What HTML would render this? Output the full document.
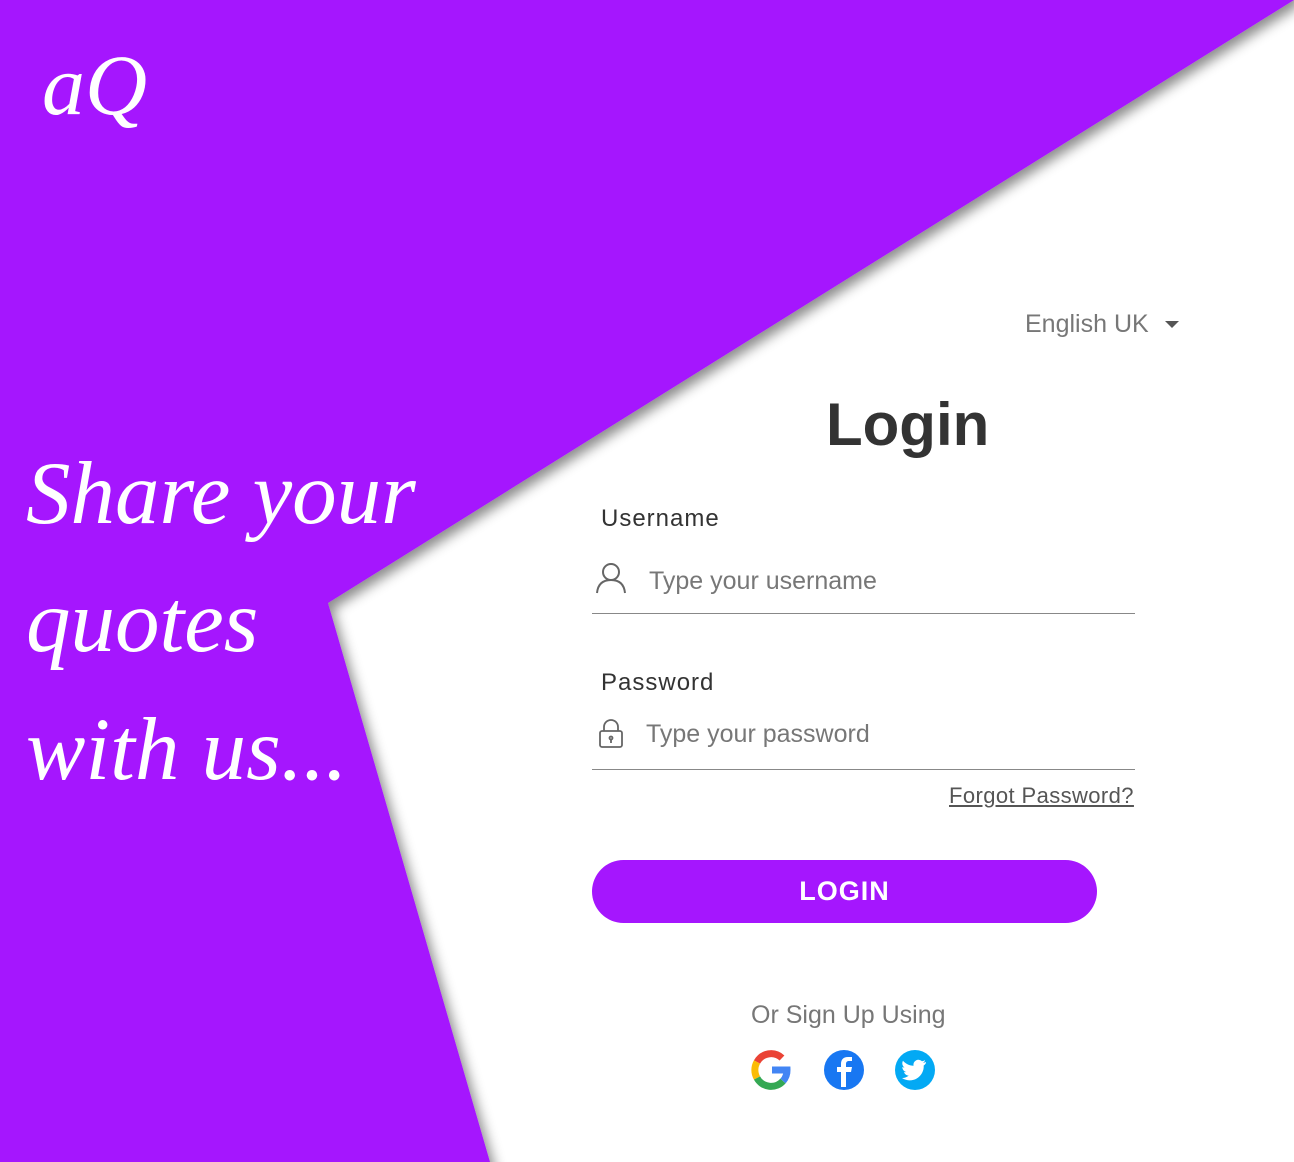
<!DOCTYPE html>
<html><head><meta charset="utf-8"><style>
body{margin:0;width:1294px;height:1162px;overflow:hidden;background:#fff;font-family:"Liberation Sans",sans-serif;position:relative}
.abs{position:absolute}
.script{font-family:"Liberation Serif",serif;font-style:italic;color:#fff}
.lab{font-size:24px;color:#333;letter-spacing:1px}
.ph{font-size:25px;color:#777}
.line{height:1px;background:#888;width:543px;left:592px}
</style></head><body>
<svg class="abs" style="left:0;top:0" width="1294" height="1162">
<defs><filter id="s" x="-20%" y="-20%" width="140%" height="140%"><feDropShadow dx="5" dy="6" stdDeviation="6" flood-color="#000" flood-opacity="0.45"/></filter></defs>
<polygon points="-20,-20 1294,-20 1294,0 328,603 490,1162 490,1182 -20,1182" fill="#a516fe" filter="url(#s)"/>
</svg>
<div class="abs script" style="left:42px;top:30px;font-size:86px;line-height:110px">aQ</div>
<div class="abs script" style="left:26px;top:430px;font-size:89px;line-height:128px">Share your<br>quotes<br>with us...</div>
<div class="abs" style="left:1025px;top:310px;font-size:25px;color:#777">English UK</div>
<div class="abs" style="left:1165px;top:321px;width:0;height:0;border-left:7px solid transparent;border-right:7px solid transparent;border-top:7px solid #555"></div>
<div class="abs" style="left:826px;top:390px;font-size:60px;font-weight:bold;color:#333">Login</div>
<div class="abs lab" style="left:601px;top:505px">Username</div>
<svg class="abs" style="left:595px;top:562px" width="32" height="32" fill="none" stroke="#666" stroke-width="2"><circle cx="16" cy="10" r="8"/><path d="M2 31c1-10 7-13 14-13s13 3 14 13"/></svg>
<div class="abs ph" style="left:649px;top:567px">Type your username</div>
<div class="abs line" style="top:613px"></div>
<div class="abs lab" style="left:601px;top:669px">Password</div>
<svg class="abs" style="left:598px;top:719px" width="26" height="30" fill="none" stroke="#666" stroke-width="1.8"><path d="M6 12V8a7 7 0 0 1 14 0v4"/><rect x="2" y="12" width="22" height="16" rx="2"/><circle cx="13" cy="19" r="1.5"/><path d="M13 20v4"/></svg>
<div class="abs ph" style="left:646px;top:720px">Type your password</div>
<div class="abs line" style="top:769px"></div>
<div class="abs" style="left:949px;top:783px;font-size:22px;color:#555;text-decoration:underline;letter-spacing:0.4px">Forgot Password?</div>
<div class="abs" style="left:592px;top:860px;width:505px;height:63px;border-radius:32px;background:#a516fe;color:#fff;font-size:27px;font-weight:bold;text-align:center;line-height:63px;letter-spacing:1px">LOGIN</div>
<div class="abs" style="left:751px;top:1001px;font-size:25px;color:#777">Or Sign Up Using</div>
<svg class="abs" style="left:751px;top:1050px" width="42" height="40" viewBox="0 0 42 40"><g fill="none" stroke-width="7"><path d="M31 8A16 16 0 0 0 6 12" stroke="#ea4335"/><path d="M6 12a16 16 0 0 0 0 16" stroke="#fbbc05"/><path d="M6 28a16 16 0 0 0 26 3" stroke="#34a853"/><path d="M32 31a16 16 0 0 0 4-11H21" stroke="#4285f4"/></g></svg>
<svg class="abs" style="left:823px;top:1049px" width="42" height="42"><circle cx="21" cy="21" r="20" fill="#1877f2"/><path d="M23 38V23h5l1-5h-6v-3c0-2 1-3 3-3h3V8h-4c-5 0-7 3-7 7v3h-4v5h4v15z" fill="#fff"/></svg>
<svg class="abs" style="left:894px;top:1049px" width="42" height="42"><circle cx="21" cy="21" r="20" fill="#03a9f4"/><path d="M32 13c-1 .5-2 .7-3 .8 1-.6 2-1.6 2-2.7-1 .6-2 1-3 1.2a5 5 0 0 0-8.5 4.5c-4 0-8-2-10.5-5-1.4 2.4-.6 5.4 1.6 6.8-.8 0-1.6-.3-2.3-.6 0 2.4 1.7 4.5 4 5-.8.2-1.6.2-2.3.1.7 2 2.6 3.4 4.7 3.5A10 10 0 0 1 8 29a14 14 0 0 0 21.7-12.5c1-.7 1.8-1.6 2.3-2.5z" fill="#fff"/></svg>
</body></html>
